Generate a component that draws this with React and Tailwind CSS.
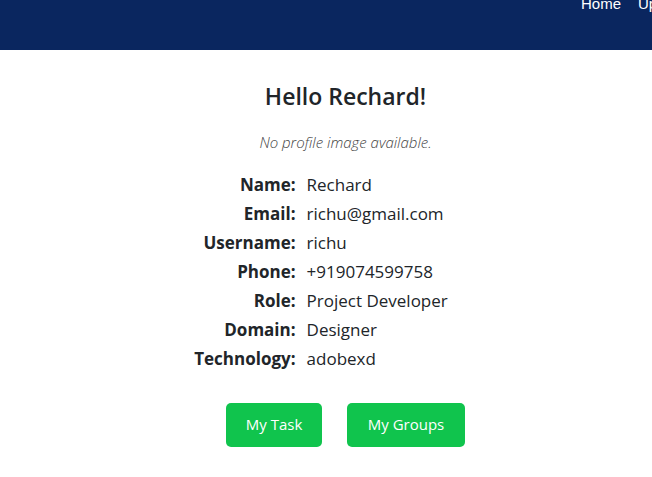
import React from 'react';

const rows = [
  ['Name:', 'Rechard'],
  ['Email:', 'richu@gmail.com'],
  ['Username:', 'richu'],
  ['Phone:', '+919074599758'],
  ['Role:', 'Project Developer'],
  ['Domain:', 'Designer'],
  ['Technology:', 'adobexd'],
];

const App = () => {
  return (
    <div className="min-h-screen bg-white overflow-hidden" style={{ fontFamily: '"Open Sans", "Noto Sans", sans-serif' }}>
      <nav className="h-[50px] bg-[#0a265f] flex justify-start whitespace-nowrap overflow-hidden">
        <div className="flex shrink-0 gap-[17px] -mt-[7px] pl-[581px] text-[15px] text-white" style={{ fontFamily: '"Liberation Sans", Arial, sans-serif' }}>
          <span>Home</span>
          <span>Update</span>
        </div>
      </nav>

      <div className="flex flex-col items-center pl-[39px] text-[#212529]">
        <h1 className="mt-[31px] text-[23px] font-semibold leading-[31px]">Hello Rechard!</h1>
        <p className="mt-[19px] text-[15px] italic font-light text-[#444]">No profile image available.</p>

        <div className="mt-[16px] -ml-[49px] grid grid-cols-[auto_auto] gap-x-[11px] text-[17px] leading-[29px]">
          {rows.map(([label, value]) => (
            <React.Fragment key={label}>
              <span className="text-right font-bold">{label}</span>
              <span>{value}</span>
            </React.Fragment>
          ))}
        </div>

        <div className="mt-[30px] flex gap-[25px]">
          <button className="w-[96px] h-[44px] rounded-[5px] bg-[#10c44d] text-white text-[15px]">My Task</button>
          <button className="w-[118px] h-[44px] rounded-[5px] bg-[#10c44d] text-white text-[15px]">My Groups</button>
        </div>
      </div>
    </div>
  );
};

export default App;
